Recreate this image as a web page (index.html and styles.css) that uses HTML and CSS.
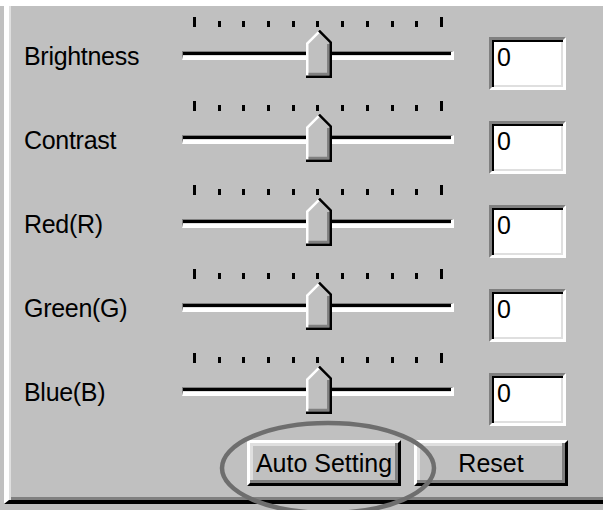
FILE: index.html
```html
<!DOCTYPE html>
<html>
<head>
    <title>Color Adjustment</title>
    <link rel="stylesheet" href="styles.css">
</head>
<body>
<div class="window">
    <div class="panel">
        <div class="row">
            <span class="label">Brightness</span>
            <div class="slider" data-value="0"></div>
            <div class="value">0</div>
        </div>
        <div class="row">
            <span class="label">Contrast</span>
            <div class="slider" data-value="0"></div>
            <div class="value">0</div>
        </div>
        <div class="row">
            <span class="label">Red(R)</span>
            <div class="slider" data-value="0"></div>
            <div class="value">0</div>
        </div>
        <div class="row">
            <span class="label">Green(G)</span>
            <div class="slider" data-value="0"></div>
            <div class="value">0</div>
        </div>
        <div class="row">
            <span class="label">Blue(B)</span>
            <div class="slider" data-value="0"></div>
            <div class="value">0</div>
        </div>

        <div class="buttons">
            <button class="btn">Auto Setting</button>
            <button class="btn">Reset</button>
        </div>
    </div>
</div>

<!-- highlight mark drawn over the dialog -->
<svg class="mark" width="603" height="510" viewBox="0 0 603 510">
    <ellipse cx="328" cy="468" rx="106" ry="45" fill="none" stroke="#6e6e6e" stroke-width="4.5"/>
</svg>

<script>
    // Build ticks, track and thumb for each slider
    var sliders = document.querySelectorAll('.slider');
    sliders.forEach(function(slider) {
        var value = parseInt(slider.dataset.value, 10);

        var ticks = document.createElement('div');
        ticks.className = 'ticks';
        for (var i = 0; i <= 10; i++) {
            var tick = document.createElement('span');
            tick.className = (i === 0 || i === 10) ? 'tick end' : 'tick';
            ticks.appendChild(tick);
        }
        slider.appendChild(ticks);

        var track = document.createElement('div');
        track.className = 'track';
        slider.appendChild(track);

        var thumb = document.createElementNS('http://www.w3.org/2000/svg', 'svg');
        thumb.setAttribute('class', 'thumb');
        thumb.setAttribute('width', '26');
        thumb.setAttribute('height', '48');
        thumb.setAttribute('viewBox', '0 0 26 48');
        thumb.innerHTML =
            '<polygon points="0,13 13,0 26,13 26,48 0,48" fill="#c0c0c0"/>' +
            '<polyline points="1.25,46 1.25,13.5 13,1.8" fill="none" stroke="#fff" stroke-width="2.5"/>' +
            '<polyline points="2.5,44 22.3,44 22.3,14" fill="none" stroke="#808080" stroke-width="2.5"/>' +
            '<polyline points="13,0.6 24.75,12.4 24.75,46.75 0,46.75" fill="none" stroke="#000" stroke-width="2.5"/>';
        // range -5 .. 5 over the tick span
        thumb.style.left = (12.5 + (value + 5) / 10 * 248 - 13) + 'px';
        slider.appendChild(thumb);
    });
</script>
</body>
</html>
```

FILE: styles.css
```css
body {
    margin: 0;
    position: relative;
    background-color: #c0c0c0;
    font-family: "Liberation Sans", Arial, sans-serif;
    font-size: 25px;
    color: #000;
}
.window {
    width: 603px;
    height: 510px;
    box-sizing: border-box;
    border-top: 6px solid #fff;
    padding-left: 4px;
    overflow: hidden;
}
.panel {
    height: 498px;
    box-sizing: border-box;
    border-left: 5px solid #fff;
    border-bottom: 4px solid #000;
    box-shadow: inset 2px 0 0 #dfdfdf, inset 0 -3px 0 #808080;
    padding: 4px 0 0 15px;
}
.row {
    display: flex;
    align-items: flex-start;
    height: 84px;
}
.label {
    width: 158px;
    margin-top: 32px;
    line-height: 29px;
    letter-spacing: -0.3px;
}
.slider {
    position: relative;
    width: 272px;
    height: 61px;
    margin-top: 7px;
}
.ticks {
    display: flex;
    justify-content: space-between;
    align-items: flex-end;
    height: 10px;
    padding: 0 11px;
}
.tick {
    width: 3px;
    height: 6px;
    background: #000;
}
.tick.end {
    height: 10px;
}
.track {
    margin-top: 24px;
    height: 4px;
    background: linear-gradient(#000 75%, #dfdfdf 75%);
    border-top: 1px solid #808080;
    border-left: 1px solid #808080;
    border-bottom: 4px solid #fff;
    border-right: 3px solid #fff;
}
.thumb {
    position: absolute;
    top: 13px;
    display: block;
}
.value {
    width: 77px;
    height: 53px;
    box-sizing: border-box;
    margin-top: 27px;
    margin-left: 35px;
    background: #fff;
    border: 3px solid;
    border-color: #808080 #fff #fff #808080;
    box-shadow: inset 2px 2px 0 #000, inset -2px -2px 0 #dfdfdf;
    padding: 3px 0 0 5px;
    line-height: 29px;
}
.buttons {
    display: flex;
    justify-content: flex-end;
    gap: 13px;
    margin-top: 10px;
    padding-right: 35px;
}
.btn {
    width: 154px;
    height: 46px;
    padding: 0;
    font: inherit;
    color: #000;
    background: #c0c0c0;
    border: 3px solid;
    border-color: #fff #000 #000 #fff;
    box-shadow: inset -3px -3px 0 #808080, inset 3px 3px 0 #dfdfdf;
}
.mark {
    position: absolute;
    top: 0;
    left: 0;
    pointer-events: none;
}
```
